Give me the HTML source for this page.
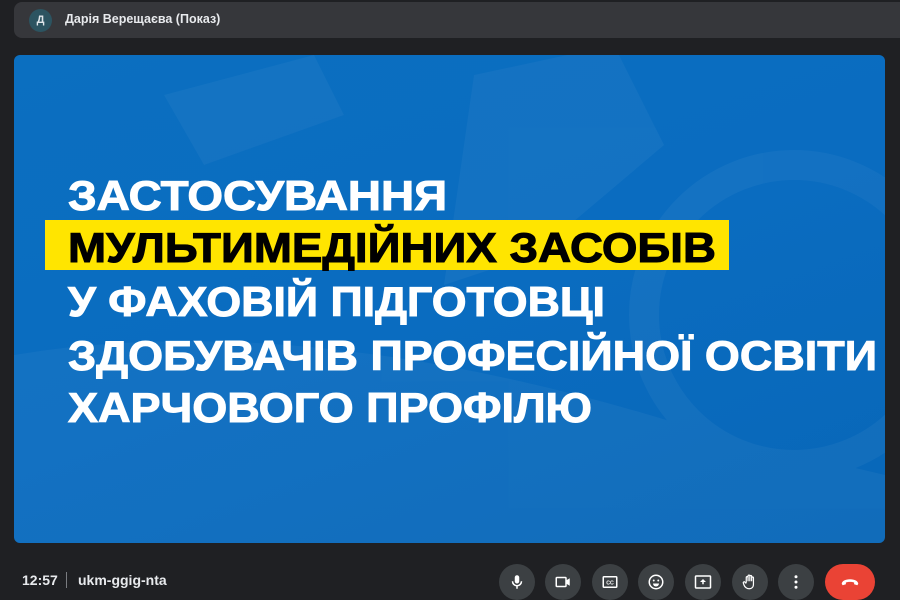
<!DOCTYPE html>
<html><head><meta charset="utf-8"><style>
*{margin:0;padding:0;box-sizing:border-box}
body{width:900px;height:600px;background:#1f2023;position:relative;overflow:hidden;font-family:"Liberation Sans",sans-serif}
.top{position:absolute;left:14px;top:2px;width:900px;height:36px;background:#36373b;border-radius:8px}
.av{position:absolute;left:29px;top:9px;width:23px;height:23px;border-radius:50%;background:#2c5461;color:#dfe6ea;font-size:11px;font-weight:bold;text-align:center;line-height:23px}
.name{position:absolute;left:65px;top:12px;color:#e8eaed;font-size:12.5px;font-weight:bold}
.slide{position:absolute;left:14px;top:55px;width:871px;height:488px;border-radius:6px;overflow:hidden;background:linear-gradient(160deg,#0b6fc0 0%,#0a6cc0 50%,#0867b8 100%)}
.btn{position:absolute;top:564px;width:36px;height:36px;border-radius:50%;background:#3c4043;display:flex;align-items:center;justify-content:center}
.end{position:absolute;left:825px;top:564px;width:50px;height:36px;border-radius:18px;background:#ea4335;display:flex;align-items:center;justify-content:center}
.bl{position:absolute;top:572px;color:#e8eaed;font-size:14px;font-weight:bold}
</style></head><body>
<div class="top"></div>
<div class="av">Д</div>
<div class="name">Дарія Верещаєва (Показ)</div>
<div class="slide">
<svg width="871" height="488" style="position:absolute;left:0;top:0">
<g fill="#ffffff" opacity="0.04">
<path d="M150 40 L300 0 L330 60 L190 110 Z"/>
<path d="M0 300 Q300 250 700 380 L871 420 L871 488 L0 488 Z"/>
<circle cx="780" cy="260" r="150" fill="none" stroke="#fff" stroke-width="30"/>
<path d="M460 20 L600 -10 L650 90 L520 200 L430 230 Z"/>
</g>
<rect x="31" y="165" width="684" height="50" fill="#ffe500"/>
<g font-family="Liberation Sans, sans-serif" font-weight="bold" font-size="42" stroke-width="1">
<text x="54" y="155" fill="#fff" stroke="#fff" textLength="379" lengthAdjust="spacingAndGlyphs">ЗАСТОСУВАННЯ</text>
<text x="54" y="207" fill="#000" stroke="#000" textLength="648" lengthAdjust="spacingAndGlyphs">МУЛЬТИМЕДІЙНИХ ЗАСОБІВ</text>
<text x="54" y="261" fill="#fff" stroke="#fff" textLength="537" lengthAdjust="spacingAndGlyphs">У ФАХОВІЙ ПІДГОТОВЦІ</text>
<text x="54" y="315" fill="#fff" stroke="#fff" textLength="809" lengthAdjust="spacingAndGlyphs">ЗДОБУВАЧІВ ПРОФЕСІЙНОЇ ОСВІТИ</text>
<text x="54" y="367" fill="#fff" stroke="#fff" textLength="524" lengthAdjust="spacingAndGlyphs">ХАРЧОВОГО ПРОФІЛЮ</text>
</g>
</svg>
</div>
<div class="bl" style="left:22px">12:57</div>
<div style="position:absolute;left:66px;top:572px;width:1px;height:16px;background:#7a7c80"></div>
<div class="bl" style="left:78px">ukm-ggig-nta</div>
<div class="btn" style="left:499px"><svg width="18" height="18" viewBox="0 0 24 24" fill="#fff"><rect x="9" y="3" width="6" height="11" rx="3"/><path d="M6 11a6 6 0 0 0 12 0" stroke="#fff" stroke-width="2" fill="none"/><rect x="11" y="17" width="2" height="4"/></svg></div>
<div class="btn" style="left:545px"><svg width="18" height="18" viewBox="0 0 24 24"><rect x="3" y="6" width="13" height="12" rx="1" fill="none" stroke="#fff" stroke-width="2"/><path d="M16 10l5-3v10l-5-3z" fill="#fff"/></svg></div>
<div class="btn" style="left:592px"><svg width="18" height="18" viewBox="0 0 24 24"><rect x="3" y="5" width="18" height="14" rx="1" fill="none" stroke="#fff" stroke-width="2"/><text x="12" y="15.5" font-size="7" font-weight="bold" fill="#fff" text-anchor="middle" font-family="Liberation Sans">CC</text></svg></div>
<div class="btn" style="left:638px"><svg width="18" height="18" viewBox="0 0 24 24"><circle cx="12" cy="12" r="9" fill="none" stroke="#fff" stroke-width="2"/><circle cx="9" cy="10" r="1.3" fill="#fff"/><circle cx="15" cy="10" r="1.3" fill="#fff"/><path d="M8 14a4 4 0 0 0 8 0z" fill="#fff"/></svg></div>
<div class="btn" style="left:685px"><svg width="18" height="18" viewBox="0 0 24 24"><rect x="2" y="4" width="20" height="16" rx="1" fill="none" stroke="#fff" stroke-width="2"/><path d="M12 8l-4 4h3v3h2v-3h3z" fill="#fff"/></svg></div>
<div class="btn" style="left:732px"><svg width="18" height="18" viewBox="0 0 24 24"><path d="M7 13V6a1.2 1.2 0 0 1 2.4 0v5M9.4 11V4a1.2 1.2 0 0 1 2.4 0v7M11.8 11V4.5a1.2 1.2 0 0 1 2.4 0V11M14.2 11V6.5a1.2 1.2 0 0 1 2.4 0V15c0 4-2.5 6-5.5 6S5 19 4 16l-1-3a1.2 1.2 0 0 1 2-1l2 2" fill="none" stroke="#fff" stroke-width="1.6"/></svg></div>
<div class="btn" style="left:778px"><svg width="18" height="18" viewBox="0 0 24 24" fill="#fff"><circle cx="12" cy="5" r="2"/><circle cx="12" cy="12" r="2"/><circle cx="12" cy="19" r="2"/></svg></div>
<div class="end"><svg width="22" height="22" viewBox="0 0 24 24"><path d="M3 14c0-3 4-5 9-5s9 2 9 5l-1 1.5-3.5-1V12.5c-1.3-.5-3-.7-4.5-.7s-3.2.2-4.5.7v2l-3.5 1z" fill="#fff"/></svg></div>
</body></html>
